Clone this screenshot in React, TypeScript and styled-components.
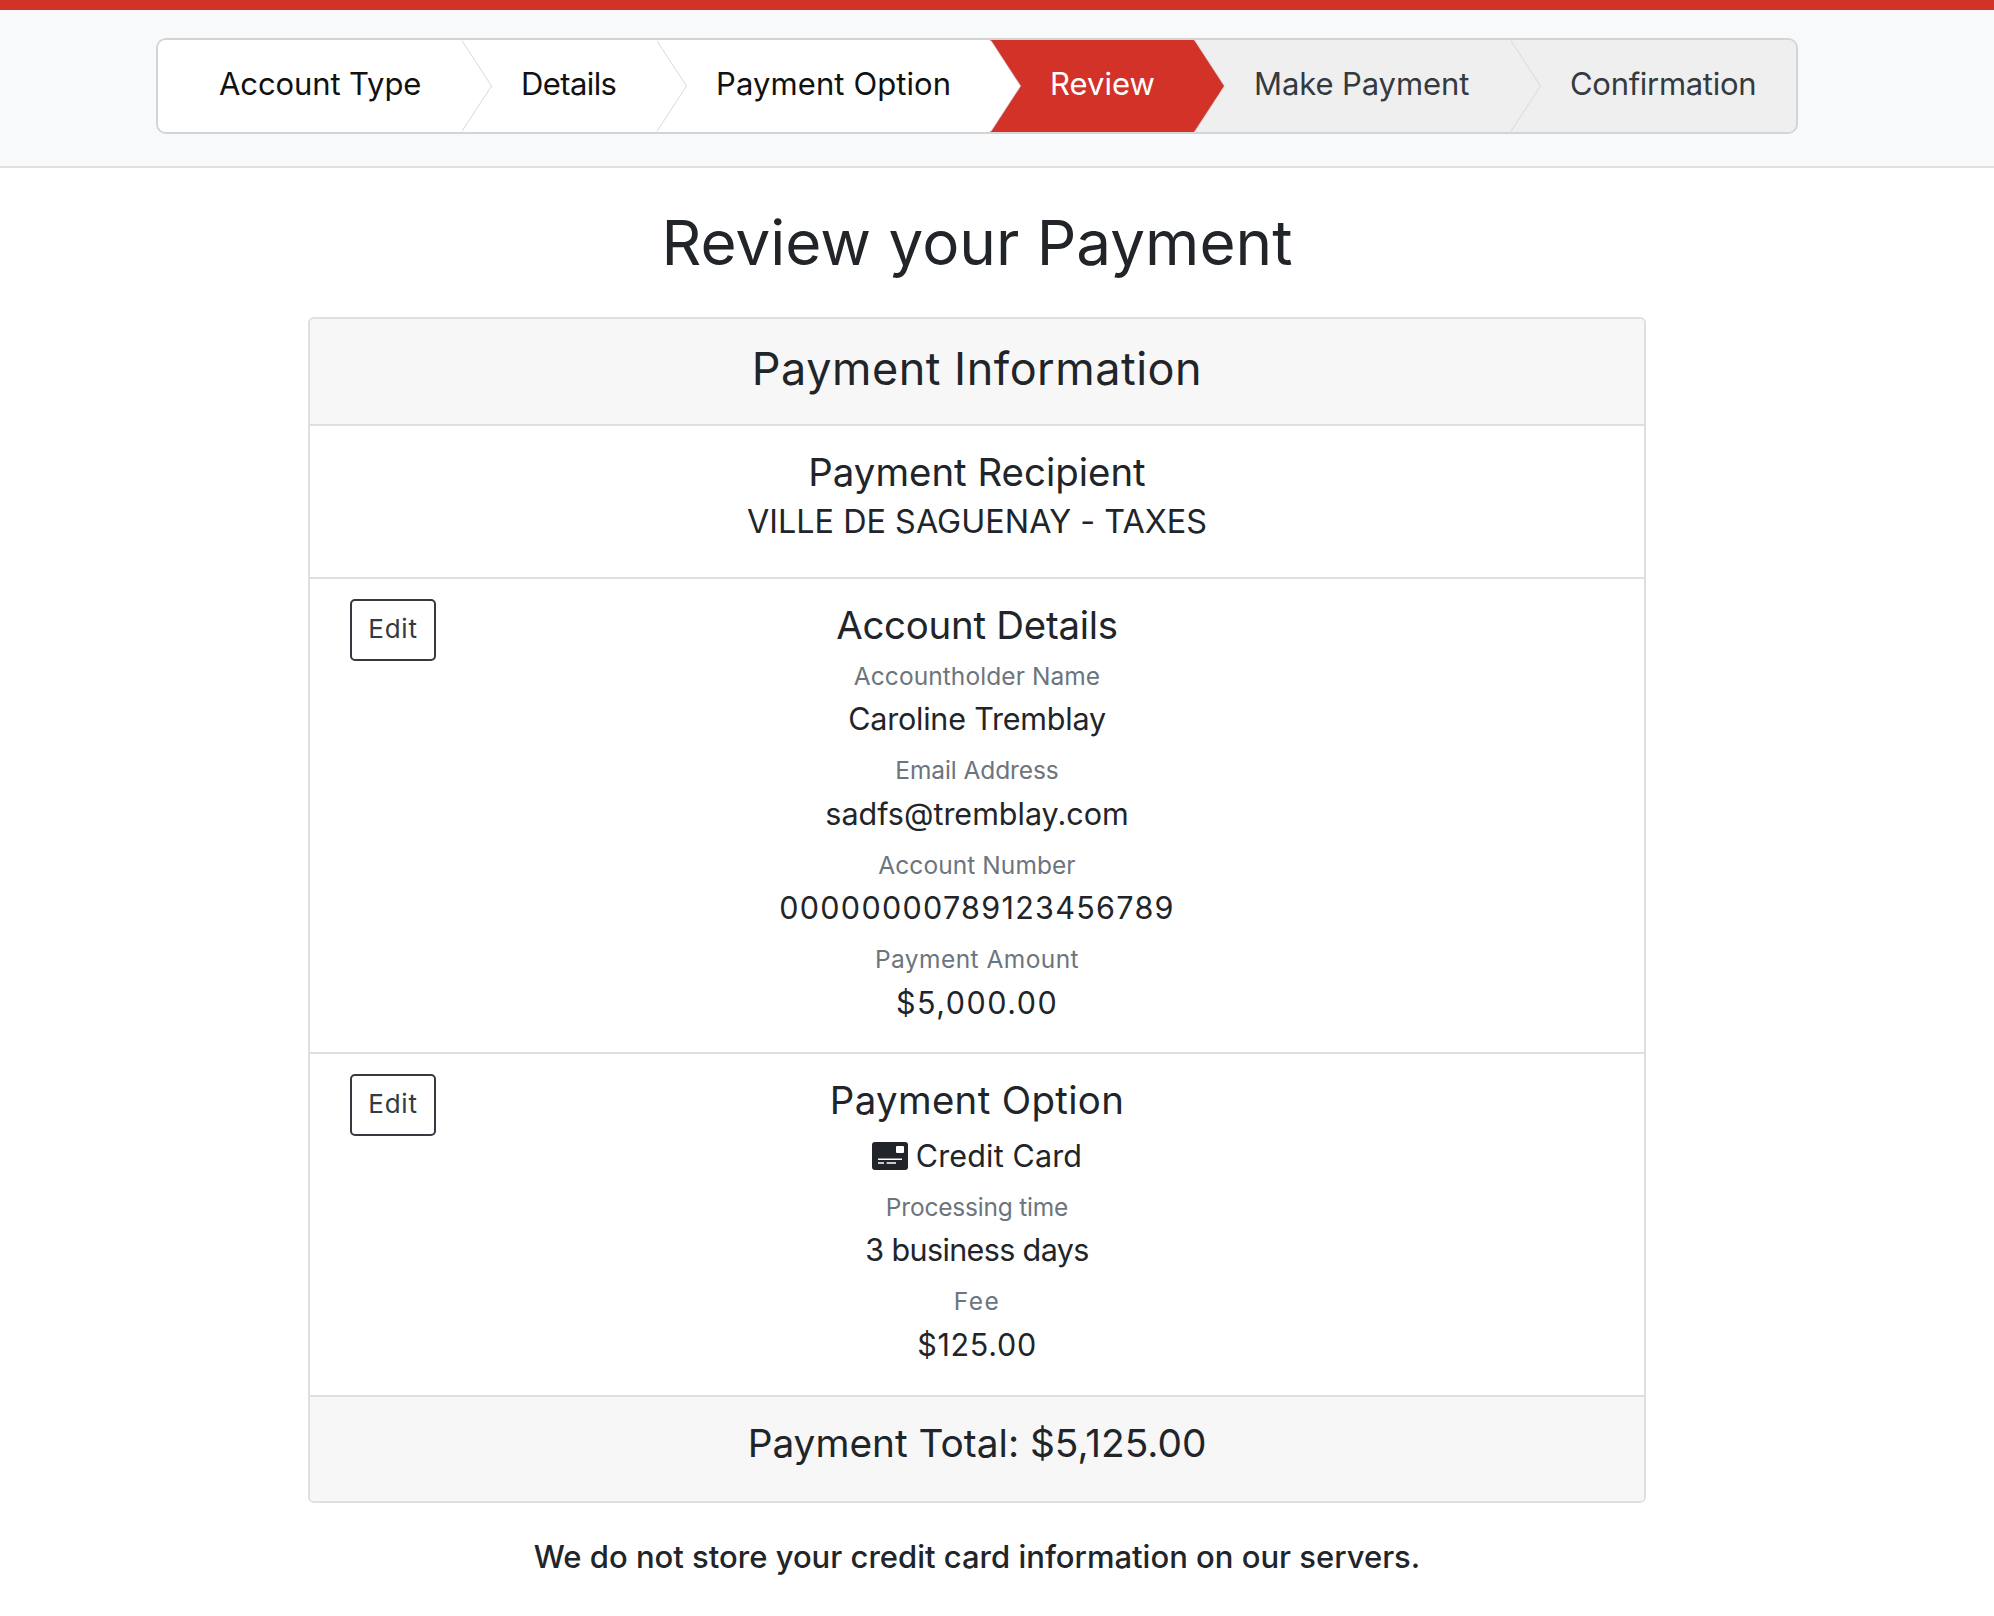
import React from "react";
import styled, { createGlobalStyle } from "styled-components";

const Global = createGlobalStyle`
  html, body { margin: 0; padding: 0; background: #fff; }
  body { font-family: Inter, "Liberation Sans", sans-serif; color: #212529; }
`;

const Page = styled.div`
  width: 1994px;
  min-height: 1616px;
`;

const TopBar = styled.header`
  border-top: 10px solid #d33228;
  background: #f8f9fa;
  border-bottom: 2px solid #dfe1e3;
  padding: 28px 196px 32px 156px;
`;

const Stepper = styled.nav`
  display: flex;
  height: 96px;
  box-sizing: border-box;
  border: 2px solid #d4d4d4;
  border-radius: 10px;
  overflow: hidden;
  background: #efefef;
`;

const Step = styled.div<{ $w: number; $bg: string; $fg: string; $z: number; $ls: number; $last?: boolean }>`
  position: relative;
  z-index: ${(p) => p.$z};
  flex: ${(p) => (p.$last ? "1 1 auto" : `0 0 ${p.$w}px`)};
  box-sizing: border-box;
  padding: 0 0 5px 60px;
  display: flex;
  align-items: center;
  background: ${(p) => p.$bg};
  color: ${(p) => p.$fg};
  font-size: 31px;
  letter-spacing: ${(p) => p.$ls}px;
  white-space: nowrap;
  &:first-child { padding-left: 61px; }
  &::before, &::after {
    content: ${(p) => (p.$last ? "none" : '""')};
    position: absolute;
    top: 0;
    bottom: 0;
    width: 30px;
    clip-path: polygon(0 0, 100% 50%, 0 100%);
  }
  &::before { right: -31px; background: #d8d8d8; }
  &::after { right: -30px; background: ${(p) => p.$bg}; }
`;

const Main = styled.main`
  padding-right: 40px;
  display: flex;
  flex-direction: column;
  align-items: center;
`;

const Title = styled.h1`
  margin: 36px 0 36px;
  font-size: 62px;
  line-height: 77px;
  font-weight: 400;
`;

const Card = styled.section`
  width: 1338px;
  box-sizing: border-box;
  border: 2px solid #dfdfdf;
  border-radius: 6px;
  overflow: hidden;
  text-align: center;
`;

const CardHead = styled.div`
  background: #f7f7f7;
  border-bottom: 2px solid #dfdfdf;
  height: 107px;
  box-sizing: border-box;
  padding-bottom: 7px;
  display: flex;
  align-items: center;
  justify-content: center;
  font-size: 45px;
  letter-spacing: 0.5px;
`;

const Row = styled.div<{ $h: number }>`
  display: grid;
  grid-template-columns: 1fr auto 1fr;
  height: ${(p) => p.$h}px;
  box-sizing: border-box;
  padding: 20px 40px 0;
  border-bottom: 2px solid #dfdfdf;
`;

const Middle = styled.div`
  grid-column: 2;
  display: flex;
  flex-direction: column;
  align-items: center;
`;

const EditButton = styled.button`
  grid-column: 1;
  justify-self: start;
  align-self: start;
  width: 86px;
  height: 62px;
  padding: 0 0 3px;
  background: #fff;
  border: 2px solid #343a40;
  border-radius: 5px;
  font: inherit;
  font-size: 26px;
  letter-spacing: 0.8px;
  color: #343a40;
`;

const SectionTitle = styled.h4<{ $gap: number; $ls: number }>`
  margin: 0 0 ${(p) => p.$gap}px;
  font-size: 38.4px;
  line-height: 52px;
  font-weight: 400;
  letter-spacing: ${(p) => p.$ls}px;
`;

const Label = styled.div<{ $ls: number }>`
  font-size: 24.5px;
  line-height: 38.4px;
  color: #6c757d;
  letter-spacing: ${(p) => p.$ls}px;
`;

const Value = styled.div<{ $ls: number; $fs?: number }>`
  font-size: ${(p) => p.$fs ?? 30.5}px;
  line-height: 48px;
  margin-bottom: 8px;
  letter-spacing: ${(p) => p.$ls}px;
  display: flex;
  align-items: center;
`;

const CardIcon = styled.svg`
  width: 36px;
  height: 28px;
  margin-right: 8px;
  flex: none;
`;

const CardFoot = styled.div`
  background: #f7f7f7;
  height: 104px;
  box-sizing: border-box;
  padding-bottom: 14px;
  display: flex;
  align-items: center;
  justify-content: center;
  font-size: 38.8px;
`;

const Note = styled.p`
  margin: 30px 0 0;
  font-size: 31px;
  line-height: 48px;
  font-weight: 500;
`;

const steps = [
  { t: "Account Type", w: 303, bg: "#fff", fg: "#111", ls: -0.1 },
  { t: "Details", w: 195, bg: "#fff", fg: "#111", ls: -0.6 },
  { t: "Payment Option", w: 334, bg: "#fff", fg: "#111", ls: 0.1 },
  { t: "Review", w: 204, bg: "#d33228", fg: "#fff", ls: 0 },
  { t: "Make Payment", w: 316, bg: "#efefef", fg: "#343a40", ls: -0.1 },
  { t: "Confirmation", w: 0, bg: "#efefef", fg: "#343a40", ls: -0.3 },
];

export default function App() {
  return (
    <Page>
      <Global />
      <TopBar>
        <Stepper>
          {steps.map((s, i) => (
            <Step key={s.t} $w={s.w} $bg={s.bg} $fg={s.fg} $ls={s.ls} $z={10 - i} $last={i === steps.length - 1}>
              {s.t}
            </Step>
          ))}
        </Stepper>
      </TopBar>
      <Main>
        <Title>Review your Payment</Title>
        <Card>
          <CardHead>Payment Information</CardHead>
          <Row $h={153}>
            <Middle>
              <SectionTitle $gap={0} $ls={0}>Payment Recipient</SectionTitle>
              <Value $ls={0.05} $fs={32.3}>VILLE DE SAGUENAY - TAXES</Value>
            </Middle>
          </Row>
          <Row $h={475}>
            <EditButton>Edit</EditButton>
            <Middle>
              <SectionTitle $gap={6} $ls={-0.25}>Account Details</SectionTitle>
              <Label $ls={0.08}>Accountholder Name</Label>
              <Value $ls={-0.2}>Caroline Tremblay</Value>
              <Label $ls={-0.1}>Email Address</Label>
              <Value $ls={0}>sadfs@tremblay.com</Value>
              <Label $ls={0.07}>Account Number</Label>
              <Value $ls={1.3}>00000000789123456789</Value>
              <Label $ls={0.44}>Payment Amount</Label>
              <Value $ls={1.5}>$5,000.00</Value>
            </Middle>
          </Row>
          <Row $h={343}>
            <EditButton>Edit</EditButton>
            <Middle>
              <SectionTitle $gap={6} $ls={0.35}>Payment Option</SectionTitle>
              <Value $ls={0.15}>
                <CardIcon viewBox="0 0 36 28">
                  <path
                    fillRule="evenodd"
                    fill="#212529"
                    d="M3 0H33A3 3 0 0 1 36 3V25A3 3 0 0 1 33 28H3A3 3 0 0 1 0 25V3A3 3 0 0 1 3 0ZM25 4A1 1 0 0 0 24 5V10A1 1 0 0 0 25 11H31A1 1 0 0 0 32 10V5A1 1 0 0 0 31 4ZM6 16.5V18H30V16.5ZM6 20.3V21.8H12V20.3ZM14.6 20.3V21.8H24V20.3Z"
                  />
                </CardIcon>
                Credit Card
              </Value>
              <Label $ls={-0.2}>Processing time</Label>
              <Value $ls={-0.63}>3 business days</Value>
              <Label $ls={1.5}>Fee</Label>
              <Value $ls={0.7}>$125.00</Value>
            </Middle>
          </Row>
          <CardFoot>Payment Total: $5,125.00</CardFoot>
        </Card>
        <Note>We do not store your credit card information on our servers.</Note>
      </Main>
    </Page>
  );
}
